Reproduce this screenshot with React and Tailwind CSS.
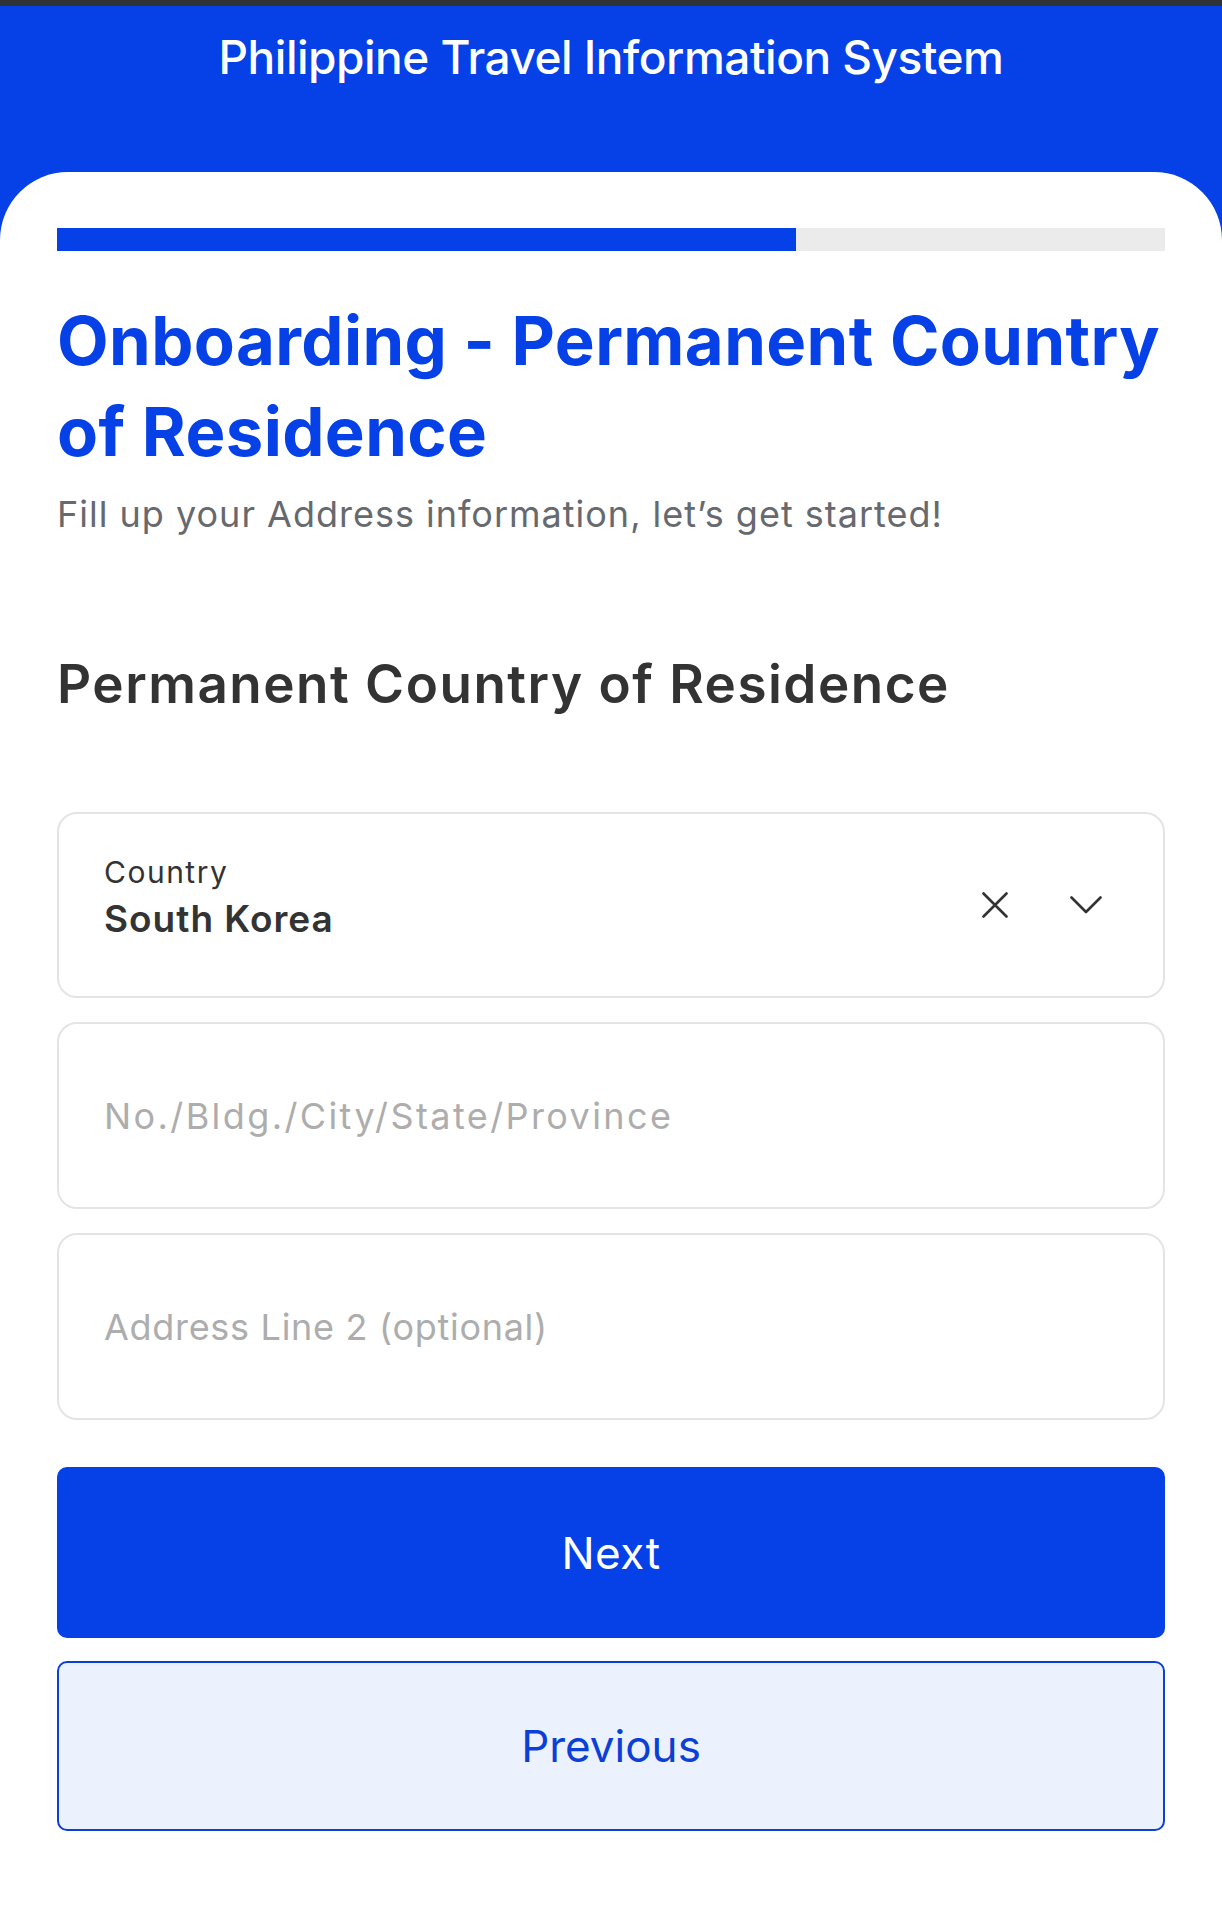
import React from "react";

const FONT = { fontFamily: "Inter, 'Open Sans', sans-serif" };

function XIcon() {
  return (
    <svg width="26" height="26" viewBox="0 0 26 26" fill="none">
      <path d="M1.5 1.5 L24.5 24.5 M24.5 1.5 L1.5 24.5" stroke="#333333" strokeWidth="2.6" strokeLinecap="round" />
    </svg>
  );
}

function ChevronIcon() {
  return (
    <svg width="32" height="18" viewBox="0 0 32 18" fill="none">
      <path d="M1.5 1.5 L16 16 L30.5 1.5" stroke="#333333" strokeWidth="2.6" strokeLinecap="round" strokeLinejoin="round" />
    </svg>
  );
}

function TextField({ placeholder, tracking }) {
  return (
    <div className="h-[187px] rounded-[20px] border-2 border-[#e4e4e4] bg-white flex items-center">
      <input
        type="text"
        placeholder={placeholder}
        className={`w-full bg-transparent outline-none pl-[45px] pr-[40px] text-[36px] leading-[48px] text-[#333333] placeholder:text-[#adadad] ${tracking}`}
        style={FONT}
      />
    </div>
  );
}

export default function App() {
  return (
    <div className="w-full h-[1920px] flex flex-col bg-[#0541e6]" style={FONT}>
      {/* status strip */}
      <div className="h-[6px] bg-[#2f3336]" />

      {/* Header */}
      <div className="h-[166px] pt-[23px]">
        <h1 className="text-center text-white text-[46px] leading-[56px] font-medium tracking-[-0.5px]">
          Philippine Travel Information System
        </h1>
      </div>

      {/* Card */}
      <div className="flex-1 bg-white rounded-t-[68px] px-[57px] pt-[56px]">
        {/* progress */}
        <div className="h-[23px] bg-[#ebebeb] flex">
          <div className="w-2/3 bg-[#0541e6]" />
        </div>

        <h2 className="mt-[44px] text-[67px] leading-[91px] font-bold text-[#0541e6] tracking-[0.4px]">
          Onboarding - Permanent Country of Residence
        </h2>
        <p className="mt-[13px] text-[36px] leading-[48px] text-[#66696d] tracking-[1px]">
          Fill up your Address information, let’s get started!
        </p>

        <h3 className="mt-[114px] text-[53px] leading-[64px] font-semibold text-[#333333] tracking-[1.5px]">
          Permanent Country of Residence
        </h3>

        <div className="mt-[96px] flex flex-col gap-[24px]">
          {/* Country select */}
          <div className="h-[186px] rounded-[20px] border-2 border-[#e4e4e4] bg-white flex items-center pl-[45px] pr-[61px]">
            <div className="flex flex-col mb-[16px]">
              <span className="text-[30px] leading-[36px] text-[#333333] tracking-[1.5px]">Country</span>
              <span className="mt-[7px] text-[37px] leading-[44px] font-semibold text-[#333333] tracking-[1px]">South Korea</span>
            </div>
            <div className="ml-auto flex items-center gap-[62px]">
              <XIcon />
              <ChevronIcon />
            </div>
          </div>

          <TextField placeholder="No./Bldg./City/State/Province" tracking="tracking-[2.4px]" />
          <TextField placeholder="Address Line 2 (optional)" tracking="tracking-[0.7px]" />
        </div>

        <div className="mt-[47px] flex flex-col gap-[23px]">
          <button className="h-[171px] rounded-[10px] bg-[#0541e6] text-white text-[44px] leading-[52px] tracking-[0.5px]">
            Next
          </button>
          <button className="h-[170px] rounded-[10px] border-2 border-[#0b3fd6] bg-[#ebf1fd] text-[#0b3fd6] text-[44px] leading-[52px]">
            Previous
          </button>
        </div>
      </div>
    </div>
  );
}
